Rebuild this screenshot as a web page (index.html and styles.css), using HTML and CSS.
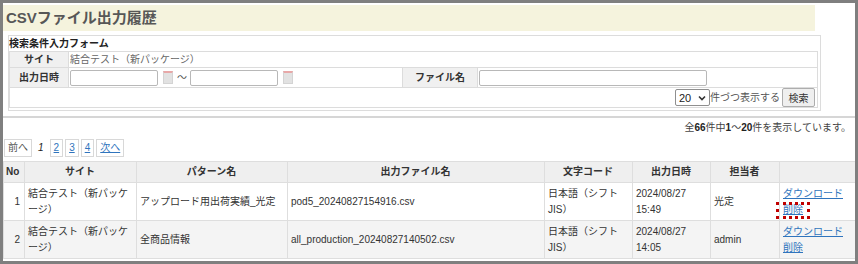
FILE: index.html
```html
<!DOCTYPE html>
<html lang="ja">
<head>
    <meta charset="UTF-8">
    <meta name="viewport" content="width=device-width, initial-scale=1.0">
    <title>CSVファイル出力履歴</title>
    <link rel="stylesheet" href="styles.css">
</head>
<body>
<div class="frame">
    <h1 class="page-title">CSVファイル出力履歴</h1>

    <div class="search-box">
        <div class="search-caption">検索条件入力フォーム</div>
        <table class="search-table">
            <colgroup>
                <col class="col-label">
                <col class="col-date">
                <col class="col-label2">
                <col>
            </colgroup>
            <tr class="row-site">
                <th>サイト</th>
                <td colspan="3" class="site-value">結合テスト（新パッケージ）</td>
            </tr>
            <tr class="row-input">
                <th>出力日時</th>
                <td>
                    <div class="date-range">
                        <input type="text" class="date-input">
                        <span class="cal-icon"></span>
                        <span class="tilde">〜</span>
                        <input type="text" class="date-input">
                        <span class="cal-icon"></span>
                    </div>
                </td>
                <th>ファイル名</th>
                <td><input type="text" class="file-input"></td>
            </tr>
            <tr class="row-input">
                <td colspan="4" class="search-actions">
                    <div class="actions-inner">
                        <span class="select-wrap">
                            <select class="per-page"><option>20</option></select>
                            <svg class="chevron" width="8" height="6" viewBox="0 0 8 6"><path d="M1 1.5 L4 4.5 L7 1.5" fill="none" stroke="#333" stroke-width="1.6"/></svg>
                        </span>
                        <span class="per-page-text">件づつ表示する</span>
                        <button class="search-btn">検索</button>
                    </div>
                </td>
            </tr>
        </table>
    </div>

    <div class="divider"></div>

    <p class="result-count">全<b>66</b>件中<b>1</b>～<b>20</b>件を表示しています。</p>

    <div class="pager">
        <span class="pg">前へ</span>
        <span class="pg-current">1</span>
        <a href="#" class="pg">2</a>
        <a href="#" class="pg">3</a>
        <a href="#" class="pg">4</a>
        <a href="#" class="pg">次へ</a>
    </div>

    <table class="history">
        <colgroup>
            <col style="width:21px">
            <col style="width:112px">
            <col style="width:151px">
            <col style="width:257px">
            <col style="width:88px">
            <col style="width:78px">
            <col style="width:69px">
            <col style="width:76px">
        </colgroup>
        <thead>
            <tr>
                <th class="no">No</th>
                <th>サイト</th>
                <th>パターン名</th>
                <th>出力ファイル名</th>
                <th>文字コード</th>
                <th>出力日時</th>
                <th>担当者</th>
                <th></th>
            </tr>
        </thead>
        <tbody>
            <tr>
                <td class="no">1</td>
                <td>結合テスト（新パッケージ）</td>
                <td>アップロード用出荷実績_光定</td>
                <td>pod5_20240827154916.csv</td>
                <td>日本語（シフトJIS）</td>
                <td>2024/08/27<br>15:49</td>
                <td>光定</td>
                <td><a href="#" class="act">ダウンロード</a><br><a href="#" class="act mark">削除</a></td>
            </tr>
            <tr class="alt">
                <td class="no">2</td>
                <td>結合テスト（新パッケージ）</td>
                <td>全商品情報</td>
                <td>all_production_20240827140502.csv</td>
                <td>日本語（シフトJIS）</td>
                <td>2024/08/27<br>14:05</td>
                <td>admin</td>
                <td><a href="#" class="act">ダウンロード</a><br><a href="#" class="act">削除</a></td>
            </tr>
        </tbody>
    </table>
</div>
</body>
</html>
```

FILE: styles.css
```css
body {
    margin: 0;
    font-family: "Liberation Sans", "Noto Sans CJK JP", sans-serif;
    font-size: 10px;
    color: #333;
    background: #fff;
}
.frame {
    width: 858px;
    height: 264px;
    box-sizing: border-box;
    border: 3px solid #7f7f7f;
    overflow: hidden;
}
.page-title {
    margin: 2px 40px 0 0;
    height: 26px;
    line-height: 26px;
    padding-left: 3px;
    background: #f5f3dd;
    font-size: 15px;
    font-weight: bold;
    color: #575757;
}

/* search form */
.search-box {
    margin: 4px 34px 0 5px;
    border: 1px solid #dcdcdc;
    padding: 0 2px 2px 0;
}
.search-caption {
    height: 15px;
    line-height: 15px;
    font-weight: bold;
    color: #222;
}
.search-table {
    width: 100%;
    border-collapse: collapse;
    table-layout: fixed;
}
.col-label { width: 59px; }
.col-date { width: 334px; }
.col-label2 { width: 75px; }
.search-table th,
.search-table td {
    border: 1px solid #dcdcdc;
    padding: 0 1px;
    line-height: 14px;
}
.search-table th {
    background: #f0f0f0;
    font-weight: bold;
    text-align: center;
    color: #333;
}
.row-site th,
.row-site td {
    height: 15px;
}
.row-input th,
.row-input td {
    height: 19px;
}
.site-value {
    color: #666;
    padding-left: 3px;
}
.date-range {
    display: flex;
    align-items: center;
}
.date-input,
.file-input {
    height: 16px;
    box-sizing: border-box;
    border: 1px solid #b8b8b8;
    border-radius: 2px;
    padding: 0 2px;
    margin: 0;
    font-size: 10px;
    display: block;
}
.date-input { width: 88px; }
.file-input { width: 228px; }
.cal-icon {
    width: 10px;
    height: 13px;
    box-sizing: border-box;
    margin-left: 5px;
    background: #e2e2e2;
    border: 1px solid #d4d4d4;
    border-top: 2px solid #e8a8a8;
}
.tilde {
    width: 14px;
    text-align: center;
    margin: 0 1px 0 2px;
    color: #555;
}
.search-actions {
    color: #555;
}
.actions-inner {
    display: flex;
    justify-content: flex-end;
    align-items: center;
}
.select-wrap {
    position: relative;
}
.per-page {
    appearance: none;
    -webkit-appearance: none;
    width: 35px;
    height: 17px;
    border: 1px solid #8f8f8f;
    border-radius: 2px;
    background: #fff;
    font-family: "Liberation Sans", sans-serif;
    font-size: 11px;
    padding: 0 0 0 3px;
    margin: 0;
    color: #222;
    display: block;
}
.chevron {
    position: absolute;
    right: 4px;
    top: 6px;
}
.search-btn {
    width: 33px;
    height: 19px;
    margin: 0 1px 0 2px;
    padding: 0;
    border: 1px solid #adadad;
    border-radius: 2px;
    background: #efefef;
    font-family: "Liberation Sans", "Noto Sans CJK JP", sans-serif;
    font-size: 10px;
    color: #333;
}

.divider {
    margin-top: 5px;
    border-top: 2px solid #d6d6d6;
}
.result-count {
    margin: 0;
    height: 20px;
    line-height: 20px;
    text-align: right;
    padding-right: 4px;
    color: #444;
}
.result-count b {
    color: #222;
}

/* pager */
.pager {
    display: flex;
    gap: 2px;
    margin: 1px 0 0 1px;
    height: 18px;
}
.pg {
    border: 1px solid #d8d8d8;
    padding: 0 3px;
    line-height: 16px;
    color: #555;
}
a.pg {
    color: #2f74bd;
    text-decoration: underline;
}
.pg-current {
    padding: 0 4px;
    line-height: 18px;
    font-style: italic;
    color: #222;
}

/* history table */
.history {
    margin-top: 4px;
    width: 852px;
    border-collapse: collapse;
    table-layout: fixed;
}
.history th,
.history td {
    border: 1px solid #dedede;
    padding: 2px 4px 2px 3px;
    line-height: 16px;
    vertical-align: middle;
    text-align: left;
}
.history th {
    height: 16px;
    background: #efefef;
    font-weight: bold;
    text-align: center;
    color: #333;
}
.history th.no {
    text-align: left;
    padding-left: 2px;
}
.history td {
    height: 33px;
    color: #333;
}
.history td.no {
    text-align: right;
}
.history tr.alt td {
    background: #f4f4f4;
}
.act {
    color: #2f74bd;
    text-decoration: underline;
}
.mark {
    position: relative;
    display: inline-block;
}
.mark::after {
    content: "";
    position: absolute;
    left: -7px;
    right: -7px;
    top: 0;
    bottom: -1px;
    border: 3px dotted #c00000;
}
```
